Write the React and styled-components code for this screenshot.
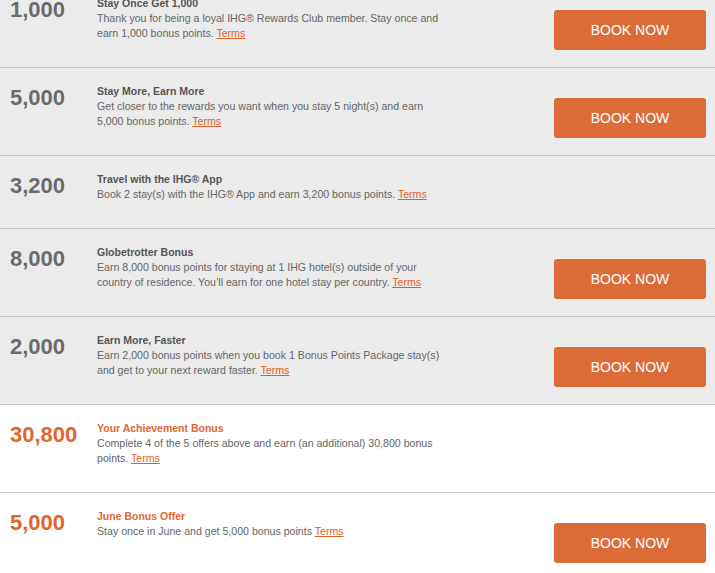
import React from 'react';
import styled, { createGlobalStyle } from 'styled-components';

const GlobalStyle = createGlobalStyle`
  html, body {
    margin: 0;
    padding: 0;
    background: #ffffff;
    overflow: hidden;
  }
  body {
    font-family: 'Liberation Sans', Arial, sans-serif;
  }
`;

const offers = [
  {
    points: '1,000',
    title: 'Stay Once Get 1,000',
    text: 'Thank you for being a loyal IHG® Rewards Club member. Stay once and earn 1,000 bonus points.',
    book: true,
  },
  {
    points: '5,000',
    title: 'Stay More, Earn More',
    text: 'Get closer to the rewards you want when you stay 5 night(s) and earn 5,000 bonus points.',
    book: true,
  },
  {
    points: '3,200',
    title: 'Travel with the IHG® App',
    text: 'Book 2 stay(s) with the IHG® App and earn 3,200 bonus points.',
    book: false,
  },
  {
    points: '8,000',
    title: 'Globetrotter Bonus',
    text: 'Earn 8,000 bonus points for staying at 1 IHG hotel(s) outside of your country of residence. You’ll earn for one hotel stay per country.',
    book: true,
  },
  {
    points: '2,000',
    title: 'Earn More, Faster',
    text: 'Earn 2,000 bonus points when you book 1 Bonus Points Package stay(s) and get to your next reward faster.',
    book: true,
  },
  {
    points: '30,800',
    title: 'Your Achievement Bonus',
    text: 'Complete 4 of the 5 offers above and earn (an additional) 30,800 bonus points.',
    book: false,
    bonus: true,
  },
  {
    points: '5,000',
    title: 'June Bonus Offer',
    text: 'Stay once in June and get 5,000 bonus points',
    book: true,
    bonus: true,
  },
];

// page is scrolled a little, first row is partly hidden
const List = styled.div`
  margin-top: -20px;
  width: 715px;
`;

const Row = styled.div`
  display: flex;
  align-items: flex-start;
  background: ${(p) => (p.$bonus ? '#ffffff' : '#ebebeb')};
  border-bottom: 1px solid #c9c9c9;
`;

const Points = styled.div`
  width: 97px;
  padding: 19px 0 0 10px;
  box-sizing: border-box;
  flex-shrink: 0;
  font-size: 22px;
  line-height: 22px;
  font-weight: bold;
  color: ${(p) => (p.$bonus ? '#e0662e' : '#6b6b6b')};
`;

const Info = styled.div`
  width: 350px;
  padding: 16px 0 26px;
  font-size: 10.6px;
  line-height: 15px;
  color: #666666;
`;

const Title = styled.div`
  font-size: 10.5px;
  font-weight: bold;
  color: ${(p) => (p.$bonus ? '#e0662e' : '#555555')};
`;

const Terms = styled.a`
  color: #e0622a;
  text-decoration: underline;
  cursor: pointer;
`;

const Action = styled.div`
  margin-left: auto;
  padding: 30px 9px 17px 0;
`;

const BookButton = styled.button`
  display: block;
  width: 152px;
  height: 40px;
  border: none;
  border-radius: 3px;
  background: #dc6c37;
  color: #ffffff;
  font-family: 'Liberation Sans', Arial, sans-serif;
  font-size: 14px;
  padding: 0;
  cursor: pointer;
`;

const App = () => {
  return (
    <>
      <GlobalStyle />
      <List>
        {offers.map((o, i) => (
          <Row key={i} $bonus={o.bonus}>
            <Points $bonus={o.bonus}>{o.points}</Points>
            <Info>
              <Title $bonus={o.bonus}>{o.title}</Title>
              <div>
                {o.text} <Terms>Terms</Terms>
              </div>
            </Info>
            {o.book && (
              <Action>
                <BookButton>BOOK NOW</BookButton>
              </Action>
            )}
          </Row>
        ))}
      </List>
    </>
  );
};

export default App;
